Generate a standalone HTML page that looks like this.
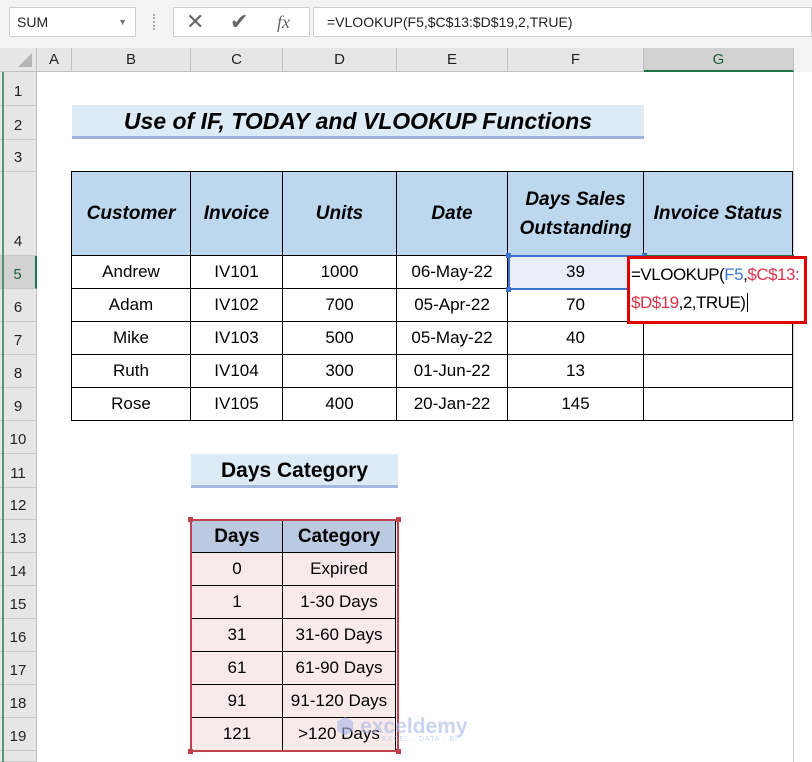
<!DOCTYPE html>
<html><head><meta charset="utf-8"><style>
*{box-sizing:border-box;margin:0;padding:0}
body{width:812px;height:762px;overflow:hidden;background:#fff;font-family:"Liberation Sans",sans-serif;position:relative;color:#000}
.a{position:absolute}
.ch{position:absolute;top:48px;height:24px;background:#e6e6e6;border-right:1px solid #bfbfbf;border-bottom:1px solid #bfbfbf;text-align:center;font-size:15px;line-height:24px;color:#222}
.rh{position:absolute;left:0;width:37px;background:#e6e6e6;border-bottom:1px solid #c8c8c8;border-right:1px solid #bfbfbf;text-align:center;font-size:15px;color:#222;display:flex;align-items:flex-end;justify-content:center;padding-bottom:5px}
.c{position:absolute;border:1px solid #000;display:flex;align-items:center;justify-content:center;font-size:17px;text-align:center;margin:-1px 0 0 -1px}
.h{background:#bdd7ee;font-weight:bold;font-style:italic;font-size:19px;line-height:29px}
.t{position:absolute;border:1px solid #000;display:flex;align-items:center;justify-content:center;font-size:17px;background:#f9eaea;margin:-1px 0 0 -1px}
.th{background:#bccae1;font-weight:bold;font-size:19px}
</style></head><body>
<div class="a" style="left:0;top:0;width:812px;height:48px;background:#f3f3f3"></div>
<div class="a" style="left:9px;top:7px;width:127px;height:30px;background:#fff;border:1px solid #d0d0d0;font-size:14px;line-height:28px;padding-left:7px;color:#222">SUM<span style="position:absolute;right:8px;top:0;font-size:9px;color:#777">▼</span></div>
<div class="a" style="left:153px;top:14px;width:2px;height:16px;border-left:2px dotted #aaa"></div>
<div class="a" style="left:173px;top:7px;width:137px;height:30px;background:#fff;border:1px solid #d0d0d0"></div>
<div class="a" style="left:186px;top:8px;font-size:22px;color:#666;line-height:28px">✕</div>
<div class="a" style="left:230px;top:8px;font-size:22px;color:#666;line-height:28px">✔</div>
<div class="a" style="left:277px;top:8px;font-size:18px;color:#666;font-style:italic;font-family:'Liberation Serif',serif;line-height:28px">fx</div>
<div class="a" style="left:313px;top:7px;width:499px;height:30px;background:#fff;border:1px solid #d0d0d0;font-size:14px;line-height:28px;padding-left:13px;color:#222">=VLOOKUP(F5,$C$13:$D$19,2,TRUE)</div>
<div class="ch" style="left:0;width:37px"><span style="position:absolute;right:4px;bottom:4px;width:0;height:0;border-left:14px solid transparent;border-bottom:14px solid #b5b5b5"></span></div>
<div class="ch" style="left:37px;width:35px">A</div>
<div class="ch" style="left:72px;width:119px">B</div>
<div class="ch" style="left:191px;width:92px">C</div>
<div class="ch" style="left:283px;width:114px">D</div>
<div class="ch" style="left:397px;width:111px">E</div>
<div class="ch" style="left:508px;width:136px">F</div>
<div class="ch" style="left:644px;width:150px;background:#d2d2d2;border-bottom:2px solid #217346;color:#1e5f3a">G</div>
<div class="ch" style="left:794px;width:18px;background:#f3f3f3;border:none"></div>
<div class="a" style="left:793px;top:72px;width:1px;height:690px;background:#d0d0d0"></div>
<div class="rh" style="top:72px;height:34px">1</div>
<div class="rh" style="top:106px;height:34px">2</div>
<div class="rh" style="top:140px;height:32px">3</div>
<div class="rh" style="top:172px;height:84px">4</div>
<div class="rh" style="top:256px;height:33px;background:#d2d2d2;border-right:2px solid #217346;color:#1e5f3a">5</div>
<div class="rh" style="top:289px;height:33px">6</div>
<div class="rh" style="top:322px;height:33px">7</div>
<div class="rh" style="top:355px;height:33px">8</div>
<div class="rh" style="top:388px;height:33px">9</div>
<div class="rh" style="top:421px;height:33px">10</div>
<div class="rh" style="top:454px;height:34px">11</div>
<div class="rh" style="top:488px;height:32px">12</div>
<div class="rh" style="top:520px;height:33px">13</div>
<div class="rh" style="top:553px;height:33px">14</div>
<div class="rh" style="top:586px;height:33px">15</div>
<div class="rh" style="top:619px;height:33px">16</div>
<div class="rh" style="top:652px;height:33px">17</div>
<div class="rh" style="top:685px;height:33px">18</div>
<div class="rh" style="top:718px;height:33px">19</div>
<div class="rh" style="top:751px;height:11px"></div>
<div class="a" style="left:2px;top:72px;width:2px;height:690px;background:#217346;opacity:.7"></div>
<div class="a" style="left:72px;top:105px;width:572px;height:34px;background:#ddebf7;border-bottom:3px solid #9db3dd;text-align:center;font-weight:bold;font-style:italic;font-size:23px;line-height:32px">Use of IF, TODAY and VLOOKUP Functions</div>
<div class="c h" style="left:72px;top:172px;width:120px;height:85px">Customer</div>
<div class="c h" style="left:191px;top:172px;width:93px;height:85px">Invoice</div>
<div class="c h" style="left:283px;top:172px;width:115px;height:85px">Units</div>
<div class="c h" style="left:397px;top:172px;width:112px;height:85px">Date</div>
<div class="c h" style="left:508px;top:172px;width:137px;height:85px">Days Sales<br>Outstanding</div>
<div class="c h" style="left:644px;top:172px;width:150px;height:85px">Invoice Status</div>

<div class="c" style="left:72px;top:256px;width:120px;height:34px">Andrew</div>
<div class="c" style="left:191px;top:256px;width:93px;height:34px">IV101</div>
<div class="c" style="left:283px;top:256px;width:115px;height:34px">1000</div>
<div class="c" style="left:397px;top:256px;width:112px;height:34px">06-May-22</div>
<div class="c" style="left:508px;top:256px;width:137px;height:34px;background:#e9eef8">39</div>
<div class="c" style="left:644px;top:256px;width:150px;height:34px"></div>
<div class="c" style="left:72px;top:289px;width:120px;height:34px">Adam</div>
<div class="c" style="left:191px;top:289px;width:93px;height:34px">IV102</div>
<div class="c" style="left:283px;top:289px;width:115px;height:34px">700</div>
<div class="c" style="left:397px;top:289px;width:112px;height:34px">05-Apr-22</div>
<div class="c" style="left:508px;top:289px;width:137px;height:34px">70</div>
<div class="c" style="left:644px;top:289px;width:150px;height:34px"></div>
<div class="c" style="left:72px;top:322px;width:120px;height:34px">Mike</div>
<div class="c" style="left:191px;top:322px;width:93px;height:34px">IV103</div>
<div class="c" style="left:283px;top:322px;width:115px;height:34px">500</div>
<div class="c" style="left:397px;top:322px;width:112px;height:34px">05-May-22</div>
<div class="c" style="left:508px;top:322px;width:137px;height:34px">40</div>
<div class="c" style="left:644px;top:322px;width:150px;height:34px"></div>
<div class="c" style="left:72px;top:355px;width:120px;height:34px">Ruth</div>
<div class="c" style="left:191px;top:355px;width:93px;height:34px">IV104</div>
<div class="c" style="left:283px;top:355px;width:115px;height:34px">300</div>
<div class="c" style="left:397px;top:355px;width:112px;height:34px">01-Jun-22</div>
<div class="c" style="left:508px;top:355px;width:137px;height:34px">13</div>
<div class="c" style="left:644px;top:355px;width:150px;height:34px"></div>
<div class="c" style="left:72px;top:388px;width:120px;height:34px">Rose</div>
<div class="c" style="left:191px;top:388px;width:93px;height:34px">IV105</div>
<div class="c" style="left:283px;top:388px;width:115px;height:34px">400</div>
<div class="c" style="left:397px;top:388px;width:112px;height:34px">20-Jan-22</div>
<div class="c" style="left:508px;top:388px;width:137px;height:34px">145</div>
<div class="c" style="left:644px;top:388px;width:150px;height:34px"></div>

<div class="a" style="left:508px;top:255px;width:137px;height:35px;border:2px solid #3b73cf"></div>
<div class="a" style="left:506px;top:253px;width:5px;height:5px;background:#3b73cf"></div>
<div class="a" style="left:642px;top:253px;width:5px;height:5px;background:#3b73cf"></div>
<div class="a" style="left:506px;top:287px;width:5px;height:5px;background:#3b73cf"></div>
<div class="a" style="left:644px;top:255px;width:150px;height:2px;background:#217346"></div>
<div class="a" style="left:627px;top:256px;width:180px;height:68px;background:#fff;border:3px solid #e00000;font-size:17px;line-height:28px;padding:2px 0 0 1px;white-space:nowrap;letter-spacing:-0.5px">=VLOOKUP(<span style="color:#3c78d8">F5</span>,<span style="color:#d9334a">$C$13:</span><br><span style="color:#d9334a">$D$19</span>,2,TRUE)<span style="border-left:1px solid #000;margin-left:2px"></span></div>

<div class="a" style="left:191px;top:454px;width:207px;height:34px;background:#ddebf7;border-bottom:3px solid #a6b8df;text-align:center;font-weight:bold;font-size:21px;line-height:33px">Days Category</div>

<div class="t th" style="left:192px;top:521px;width:92px;height:33px">Days</div>
<div class="t th" style="left:283px;top:521px;width:114px;height:33px">Category</div>
<div class="t" style="left:192px;top:553px;width:92px;height:34px">0</div>
<div class="t" style="left:283px;top:553px;width:114px;height:34px">Expired</div>
<div class="t" style="left:192px;top:586px;width:92px;height:34px">1</div>
<div class="t" style="left:283px;top:586px;width:114px;height:34px">1-30 Days</div>
<div class="t" style="left:192px;top:619px;width:92px;height:34px">31</div>
<div class="t" style="left:283px;top:619px;width:114px;height:34px">31-60 Days</div>
<div class="t" style="left:192px;top:652px;width:92px;height:34px">61</div>
<div class="t" style="left:283px;top:652px;width:114px;height:34px">61-90 Days</div>
<div class="t" style="left:192px;top:685px;width:92px;height:34px">91</div>
<div class="t" style="left:283px;top:685px;width:114px;height:34px">91-120 Days</div>
<div class="t" style="left:192px;top:718px;width:92px;height:34px">121</div>
<div class="t" style="left:283px;top:718px;width:114px;height:34px">&gt;120 Days</div>
<div class="a" style="left:190px;top:519px;width:209px;height:233px;border:2px solid #c0424c"></div>
<div class="a" style="left:188px;top:517px;width:5px;height:5px;background:#c0424c"></div>
<div class="a" style="left:396px;top:517px;width:5px;height:5px;background:#c0424c"></div>
<div class="a" style="left:188px;top:749px;width:5px;height:5px;background:#c0424c"></div>
<div class="a" style="left:396px;top:749px;width:5px;height:5px;background:#c0424c"></div>
<div class="a" style="left:336px;top:714px;font-size:21px;font-weight:bold;color:#a8b8e8;opacity:.6">⬢ exceldemy</div>
<div class="a" style="left:382px;top:736px;font-size:7px;color:#a8b8e8;opacity:.6;letter-spacing:1px">EXCEL · DATA · BI</div>
</body></html>
